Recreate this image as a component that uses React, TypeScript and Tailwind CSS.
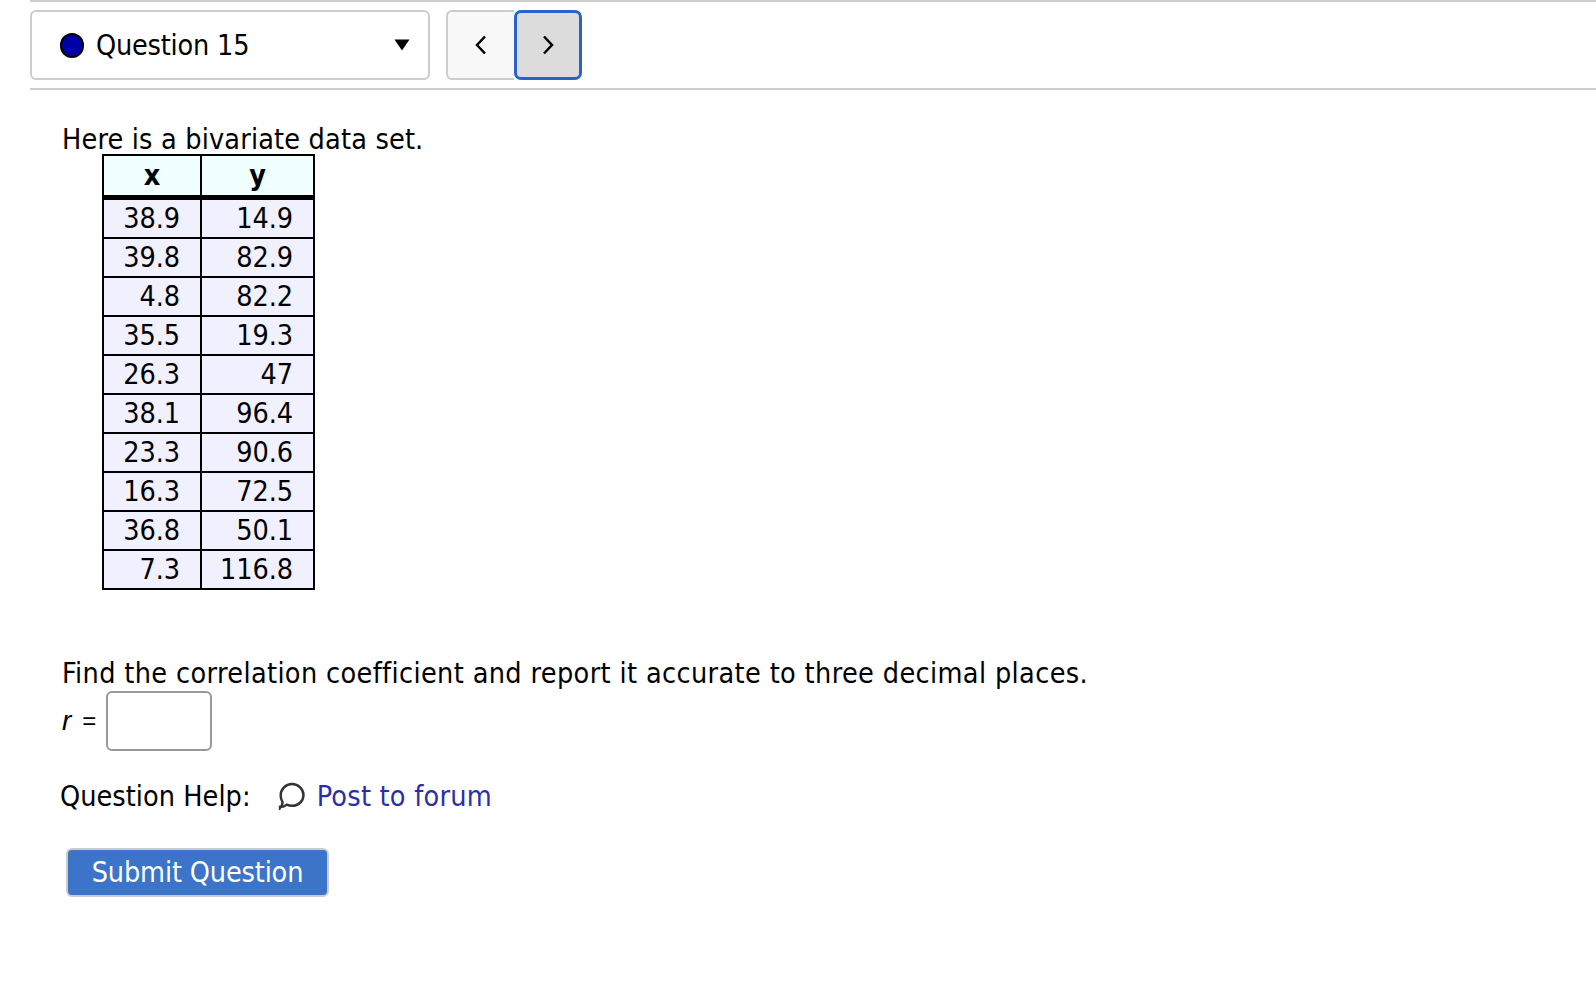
import React from "react";

const rows = [
  ["38.9", "14.9"],
  ["39.8", "82.9"],
  ["4.8", "82.2"],
  ["35.5", "19.3"],
  ["26.3", "47"],
  ["38.1", "96.4"],
  ["23.3", "90.6"],
  ["16.3", "72.5"],
  ["36.8", "50.1"],
  ["7.3", "116.8"],
];

const App: React.FC = () => (
  <div className="min-h-[990px] bg-white text-black text-[28.5px] leading-[39px] font-['DejaVu_Sans_Condensed','DejaVu_Sans',sans-serif]">
    <div className="ml-[30px] border-t-2 border-b-2 border-[#cccccc] py-2 flex gap-[16px]">
      <div className="w-[400px] h-[70px] border-2 border-[#cccccc] rounded-[6px] flex items-center pl-[28px] pr-[18px]">
        <span className="w-[24px] h-[25px] rounded-full bg-[#0000a8] border-2 border-black" />
        <span className="ml-[12px] flex-1 tracking-[-0.2px]">Question 15</span>
        <svg width="16" height="12" viewBox="0 0 16 12"><path d="M0.500 0.500h15L8 11.500z" fill="#000" /></svg>
      </div>
      <div className="flex h-[70px]">
        <button className="w-[68px] bg-[#f8f8f8] border-2 border-r-0 border-[#cccccc] rounded-l-[6px] flex items-center justify-center">
          <svg width="12" height="20" viewBox="0 0 12 20" fill="none" stroke="#000" strokeWidth="2.500"><path d="M10 1.500 2 10l8 8.500" /></svg>
        </button>
        <button className="w-[68px] bg-[#dcdcdc] border-[3px] border-[#2a63c7] rounded-[7px] flex items-center justify-center">
          <svg width="12" height="20" viewBox="0 0 12 20" fill="none" stroke="#000" strokeWidth="2.500"><path d="M2 1.500 10 10l-8 8.500" /></svg>
        </button>
      </div>
    </div>

    <div className="pl-[62px] pt-[35px]">
      <p className="leading-[29px] tracking-[0.18px]">Here is a bivariate data set.</p>
      <table className="ml-[40px] border-collapse border-2 border-black leading-[37px] tracking-[-0.1px]">
        <thead>
          <tr className="bg-[#f0ffff]">
            <th className="w-[98px] h-[42px] p-0 border-2 border-black border-b-[5px] text-center font-bold">x</th>
            <th className="w-[113px] h-[42px] p-0 border-2 border-black border-b-[5px] text-center font-bold">y</th>
          </tr>
        </thead>
        <tbody>
          {rows.map((row, index) => (
            <tr key={index} className="bg-[#f0f0ff]">
              {row.map((value, cell) => (
                <td key={cell} className="h-[37px] p-0 pr-[20px] border-2 border-black text-right">{value}</td>
              ))}
            </tr>
          ))}
        </tbody>
      </table>

      <p className="mt-[64px] tracking-[0.37px]">Find the correlation coefficient and report it accurate to three decimal places.</p>
      <div className="flex items-center h-[60px] -mt-[2px]">
        <span className="italic font-['Liberation_Sans',sans-serif] text-[28px]">r</span>
        <span className="ml-[11px] text-[24px] font-['Liberation_Sans',sans-serif]">=</span>
        <input className="ml-[10px] w-[106px] h-[60px] border-2 border-[#999999] rounded-[6px] bg-white" />
      </div>

      <div className="flex items-center mt-[26px] -ml-[2px]">
        <span className="tracking-[0.05px]">Question Help:</span>
        <svg className="ml-[27px] -mt-[2px]" width="29" height="29" viewBox="0 0 28 28" fill="none" stroke="#333" strokeWidth="2.400">
          <path d="M2 26c1.800-2.300 2.600-3.800 2.400-5.500C3.200 18.500 2.600 16.500 2.600 14c0-6 4.800-11 11-11 6 0 11 5 11 10.500 0 6-5 10.500-11 10.500-2 0-3.500-.4-5-1.200-1.600 1.300-3.400 2.300-6.600 2.200z" />
        </svg>
        <a className="ml-[10px] text-[#2a2fa8] tracking-[0.25px]">Post to forum</a>
      </div>

      <button className="mt-[32px] ml-[4px] block w-[263px] h-[49px] bg-[#3b74c9] border-2 border-[#cccccc] rounded-[6px] text-white text-center tracking-[-0.15px]">
        Submit Question
      </button>
    </div>
  </div>
);

export default App;
